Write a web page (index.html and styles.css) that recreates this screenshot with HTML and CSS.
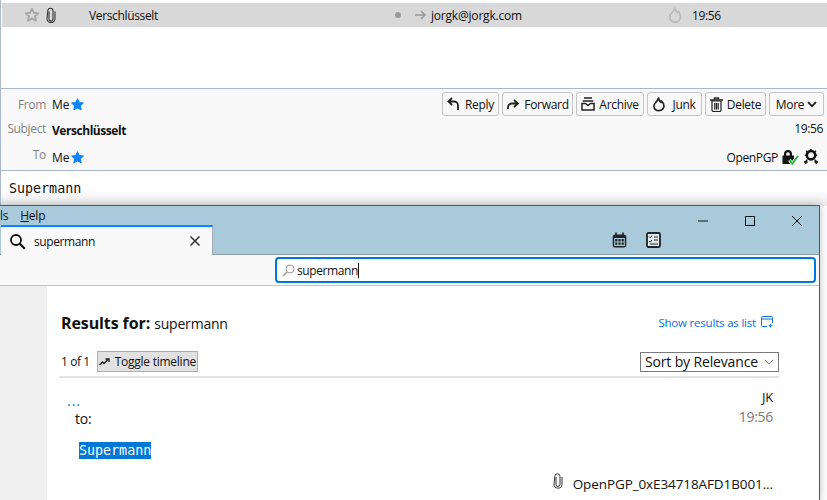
FILE: index.html
```html
<!DOCTYPE html>
<html lang="en">
<head>
<meta charset="utf-8">
<title>Supermann</title>
<link rel="stylesheet" href="styles.css">
</head>
<body>
<section class="mail">
  <div class="row">
    <span class="cell-star"><svg width="16" height="16" viewBox="0 0 16 16"><path d="M8 1.800l1.900 4 4.400.5-3.200 3 .9 4.400L8 11.500l-4 2.200.9-4.400-3.200-3 4.400-.5z" fill="none" stroke="#aaa" stroke-width="2" stroke-linejoin="round"/></svg></span>
    <span class="cell-clip"><svg width="10" height="16" viewBox="0 0 10 16"><path d="M3 4v7.500a2 2 0 0 0 4 0V3.500a2.600 2.600 0 0 0-5.200-.2L1 11a4 4 0 0 0 8 .3V4" transform="translate(0 .5)" fill="none" stroke="#333" stroke-width="1.100"/></svg></span>
    <span class="cell-subject">Verschlüsselt</span>
    <span class="cell-dot"></span>
    <span class="cell-arrow"><svg width="14" height="12" viewBox="0 0 14 12"><path d="M1 6h10M7 2l4 4-4 4" fill="none" stroke="#999" stroke-width="1.600"/></svg></span>
    <span class="cell-to">jorgk@jorgk.com</span>
    <span class="cell-flame"><svg width="14" height="16" viewBox="0 0 14 16"><path d="M7 .8c.5 2.800 1.300 3.700 2.500 5.200.1-.8.300-1.300.6-1.800 1.400 1.500 2.400 3.200 2.400 5.500a5.400 5.400 0 0 1-10.800 0C1.700 7.700 3.200 6.500 4.500 5c1.200-1.300 2-2.700 2.500-4.200z" fill="none" stroke="#bbb" stroke-width="1.800" stroke-linejoin="round"/></svg></span>
    <span class="cell-time">19:56</span>
  </div>
  <div class="spacer"></div>
  <header class="head">
    <div class="head-line first">
      <span class="label">From</span>
      <span class="who">Me</span>
      <svg class="fav" width="13" height="13" viewBox="0 0 14 14"><path d="M7 .8l2 4 4.400.6-3.200 3 .8 4.400L7 10.700l-4 2.100.8-4.400L.6 5.400 5 4.800z" fill="#0a84ff" stroke="#0a84ff" stroke-linejoin="round"/></svg>
      <div class="actions">
        <button class="btn btn-reply"><svg width="13" height="14" viewBox="0 0 13 14"><path d="M5 1L1.500 4.500 5 8M2 4.500h5a4 4 0 0 1 4 4V13" fill="none" stroke="#222" stroke-width="1.800"/></svg>Reply</button>
        <button class="btn btn-forward"><svg width="13" height="10" viewBox="0 0 13 10"><path d="M8 1l4 3.500L8 8M11.500 4.500H6a4 4 0 0 0-4 4V10" fill="none" stroke="#222" stroke-width="1.800"/></svg>Forward</button>
        <button class="btn btn-archive"><svg width="14" height="14" viewBox="0 0 14 14"><path d="M3 1h8M1.700 4h10.600" fill="none" stroke="#222" stroke-width="1.300"/><path d="M1 6.500h3.500L7 8.500l2.500-2H13V13H1z" fill="none" stroke="#222" stroke-width="1.500"/></svg>Archive</button>
        <button class="btn btn-junk"><svg width="12" height="15" viewBox="0 0 12 15"><path d="M5.500 1c.5 2.500 1.200 3.200 2.400 4.400 0-.7.200-1.100.500-1.500 1.500 1.500 2.600 3 2.600 5.300A5.100 5.100 0 0 1 .9 9.300C.9 6.800 2.500 5.800 3.700 4.400 4.600 3.400 5.200 2.200 5.500 1z" fill="none" stroke="#222" stroke-width="1.700" stroke-linejoin="round"/></svg>Junk</button>
        <button class="btn btn-delete"><svg width="13" height="15" viewBox="0 0 13 15"><path d="M0 3h13M4.500 2.500V1h4v1.500" fill="none" stroke="#222" stroke-width="1.300"/><path d="M2 4h9v9a1.500 1.500 0 0 1-1.500 1.500h-6A1.500 1.500 0 0 1 2 13zM4.800 6v6.500M6.500 6v6.500M8.200 6v6.500" fill="none" stroke="#222" stroke-width="1.200"/></svg>Delete</button>
        <button class="btn btn-more">More<svg width="10" height="7" viewBox="0 0 10 7"><path d="M1 1.200l4 4 4-4" fill="none" stroke="#222" stroke-width="1.800"/></svg></button>
      </div>
    </div>
    <div class="head-line second">
      <span class="label">Subject</span>
      <span class="subject">Verschlüsselt</span>
      <span class="date">19:56</span>
    </div>
    <div class="head-line third">
      <span class="label">To</span>
      <span class="who">Me</span>
      <svg class="fav" width="13" height="13" viewBox="0 0 14 14"><path d="M7 .8l2 4 4.400.6-3.200 3 .8 4.400L7 10.700l-4 2.100.8-4.400L.6 5.400 5 4.800z" fill="#0a84ff" stroke="#0a84ff" stroke-linejoin="round"/></svg>
      <span class="pgp">OpenPGP</span>
      <svg class="lock" width="17" height="16" viewBox="0 0 17 16"><path d="M.5 6.500H2V5a4 4 0 0 1 8 0v1.500h2V15H.5zM4.200 6.500h3.600V5a1.800 1.800 0 0 0-3.600 0z" fill="#111" fill-rule="evenodd"/><path d="M7.500 11l2.800 3.600L16 7" fill="none" stroke="#f8f8f8" stroke-width="3.400"/><path d="M7.500 11l2.800 3.600L16 7" fill="none" stroke="#26b83a" stroke-width="2"/></svg>
      <svg class="seal" width="16" height="16" viewBox="0 0 16 16"><circle cx="8" cy="6.200" r="4.200" fill="none" stroke="#111" stroke-width="2.600"/><path d="M8 0v1.500M3.200 1.800l1.200 1.200M12.800 1.800l-1.200 1.200M1.800 6.200h1.400M12.800 6.200h1.400" stroke="#111" stroke-width="1.500"/><path d="M4.300 10.500L2.800 13M11.700 10.500l1.500 2.500M1 13h3.600M2.800 11.500v3.500M11.400 13H15M13.200 11.500v3.500" stroke="#111" stroke-width="1.400"/></svg>
    </div>
  </header>
  <div class="body-text">Supermann</div>
</section>

<section class="window">
  <div class="titlebar">
    <div class="menubar"><span>ls</span><span class="help"><u>H</u>elp</span></div>
    <div class="controls">
      <svg width="12" height="12" viewBox="0 0 12 12"><path d="M1 6h10" stroke="#111"/></svg>
      <svg width="12" height="12" viewBox="0 0 12 12"><rect x="1.500" y="1.500" width="9" height="9" fill="none" stroke="#111"/></svg>
      <svg width="12" height="12" viewBox="0 0 12 12"><path d="M1 1l10 10M11 1L1 11" stroke="#111"/></svg>
    </div>
    <div class="tabrow">
      <div class="tab">
        <svg class="tab-search" width="17" height="17" viewBox="0 0 17 17"><circle cx="7" cy="7" r="5" fill="none" stroke="#111" stroke-width="1.800"/><path d="M10.800 10.800l5 5" stroke="#111" stroke-width="2.200"/></svg>
        <span class="tab-label">supermann</span>
        <svg class="tab-close" width="12" height="12" viewBox="0 0 12 12"><path d="M1.500 1.500l9 9M10.500 1.500l-9 9" stroke="#333" stroke-width="1.500"/></svg>
      </div>
      <div class="tools">
        <svg width="15" height="16" viewBox="0 0 15 16"><path d="M4 .5v3.500M11 .5v3.500" stroke="#222" stroke-width="1.600"/><rect x=".7" y="2.400" width="13.600" height="13" rx="2.500" fill="#222"/><rect x="2.200" y="6" width="10.600" height="8" fill="#a8cadb"/><path d="M3.200 7h2.200v2.400H3.200zM6.400 7h2.200v2.400H6.400zM9.600 7h2.200v2.400H9.600zM3.200 10.400h2.200v2.400H3.200zM6.400 10.400h2.200v2.400H6.400zM9.600 10.400h2.200v2.400H9.600z" fill="#222"/></svg>
        <svg width="15" height="16" viewBox="0 0 15 16"><rect x="1" y="1" width="13" height="14" rx="1.500" fill="#dfe9ee" stroke="#222" stroke-width="1.800"/><path d="M3 4.500l1.200 1.200L6 3.500M3 9l1.200 1.200L6 8M8 5h4M8 8h4M4 12h8" fill="none" stroke="#222"/></svg>
      </div>
    </div>
  </div>
  <div class="toolbar">
    <div class="searchbox">
      <svg width="13" height="13" viewBox="0 0 13 13"><circle cx="8" cy="5" r="4" fill="none" stroke="#999"/><path d="M5 8l-4 4" stroke="#999" stroke-width="1.400"/></svg>
      <span class="search-text">supermann</span><span class="caret"></span>
    </div>
  </div>
  <div class="content">
    <aside class="gutter"></aside>
    <main class="results">
      <div class="results-head">
        <h1><b>Results for:</b> <span>supermann</span></h1>
        <a class="aslist">Show results as list<svg width="12" height="12" viewBox="0 0 12 12"><path d="M6 10.500H1.500a1 1 0 0 1-1-1v-8a1 1 0 0 1 1-1h9a1 1 0 0 1 1 1V7M.5 3h11M9.500 8v3.500M7.500 9.800h4" fill="none" stroke="#0a6fdc"/></svg></a>
      </div>
      <div class="results-bar">
        <span class="count">1 of 1</span>
        <span class="timeline"><svg width="11" height="8" viewBox="0 0 11 8"><path d="M.5 7l3-3 1.500 1.500L9 1.500M6.500 1H10v3" fill="none" stroke="#222" stroke-width="1.400"/></svg>Toggle timeline</span>
        <span class="sort">Sort by Relevance<svg width="10" height="6" viewBox="0 0 10 6"><path d="M.8.800L5 5 9.200.8" fill="none" stroke="#777"/></svg></span>
      </div>
      <article class="hit">
        <div class="hit-top"><a class="dots">...</a><span class="author">JK</span></div>
        <div class="hit-mid"><span class="to">to:</span><span class="time">19:56</span></div>
        <div class="snippet"><mark>Supermann</mark></div>
        <div class="attach"><svg width="10" height="16" viewBox="0 0 10 16"><path d="M3 4v7.500a2 2 0 0 0 4 0V3.500a2.600 2.600 0 0 0-5.200-.2L1 11a4 4 0 0 0 8 .3V4" fill="none" stroke="#333"/></svg><span>OpenPGP_0xE34718AFD1B001...</span></div>
      </article>
    </main>
  </div>
</section>
</body>
</html>
```

FILE: styles.css
```css
* { box-sizing: border-box; }
html, body { margin: 0; padding: 0; height: 500px; overflow: hidden; background: #fff; }
body { font-family: "Open Sans", "Noto Sans", sans-serif; font-size: 12px; color: #111; position: relative; }
svg { flex: none; display: block; }

.mail { height: 206px; border-left: 1px solid #a9b8cd; padding-top: 3px;
  background: linear-gradient(#fff 190px, #ececec 203px); }
.row { height: 24px; margin-left: 1px; background: #d8d8d8; display: flex; align-items: center; letter-spacing: -.35px; }
.cell-star { margin-left: 22px; width: 22px; }
.cell-clip { width: 43px; }
.cell-subject { width: 306px; }
.cell-dot { width: 6px; height: 6px; border-radius: 50%; background: #999; margin-right: 13px; }
.cell-arrow { width: 17px; }
.cell-to { width: 237px; letter-spacing: -.2px; }
.cell-flame { width: 24px; }
.spacer { height: 62px; border-bottom: 1px solid #a9b8cd; }
.head { height: 82px; background: #f8f8f8; border-bottom: 1px solid #a9b8cd; padding-top: 1px; letter-spacing: -.35px; }
.head-line { display: flex; align-items: center; position: relative; }
.first { height: 28px; }
.second { height: 24px; }
.third { height: 28px; }
.label { width: 45px; text-align: right; color: #848484; margin-right: 6px; }
.second .label { margin-top: -3px; }
.third .label { margin-top: -3px; }
.who { letter-spacing: 0; }
.third .who, .third .fav, .third .pgp, .third .lock, .third .seal { margin-top: 2px; }
.fav { margin-left: 1px; }
.actions { margin-left: auto; margin-right: 3px; display: flex; gap: 3px; }
.btn { height: 24px; font: inherit; letter-spacing: -.3px; color: #111; background: #f8f8f8; border: 1px solid #c4c4c4; border-radius: 3px;
  padding: 0; display: flex; align-items: center; justify-content: center; gap: 5px; }
.btn-reply { width: 57px; }
.btn-forward { width: 71px; }
.btn-archive { width: 68px; gap: 4px; }
.btn-junk { width: 55px; gap: 7px; }
.btn-delete { width: 61px; gap: 4px; }
.btn-more { width: 55px; gap: 3px; }
.subject { font-weight: 700; letter-spacing: -.45px; }
.date { margin-left: auto; margin-right: 4px; margin-top: -3px; }
.pgp { margin-left: auto; margin-right: 4px; }
.lock { margin-right: 4px; }
.seal { margin-right: 8px; }
.body-text { font-family: "DejaVu Sans Mono", monospace; font-size: 13.33px; padding: 10px 0 0 8px; line-height: 15px; }

.window { position: absolute; left: -1px; top: 205px; width: 821px; height: 296px; border: 1px solid #555; border-left: 0; border-bottom: 0;
  background: #fff; box-shadow: 0 0 8px rgba(0,0,0,.25); letter-spacing: -.25px; }
.titlebar { height: 49px; background: #a8cadb; border-bottom: 1px solid #8a9ba5; position: relative; }
.menubar { height: 19px; display: flex; align-items: center; gap: 12px; padding-left: 1px; }
.controls { position: absolute; top: 9px; right: 16px; display: flex; gap: 35px; }
.tabrow { position: absolute; left: 0; right: 0; bottom: -1px; height: 30px; display: flex; }
.tab { width: 212px; margin-left: 2px; height: 30px; background: #f9f9f9; border-top: 2px solid #0a84ff; border-right: 1px solid #aab; display: flex; align-items: center; position: relative; z-index: 1; }
.tab-search { margin-left: 8px; }
.tab-label { margin-left: 8px; letter-spacing: -.4px; }
.tab-close { margin-left: auto; margin-right: 11px; }
.tools { margin-left: 399px; display: flex; gap: 19px; padding-top: 7px; }
.toolbar { height: 31px; background: #f9f9f9; border-bottom: 1px solid #c4c4c4; padding: 2px 3px 0 276px; }
.searchbox { height: 26px; border: 2px solid #0078d7; border-radius: 4px; background: #fff; display: flex; align-items: center; padding-left: 5px; }
.search-text { margin-left: 2px; letter-spacing: -.4px; }
.caret { width: 1px; height: 15px; background: #111; }
.content { display: flex; height: 215px; }
.gutter { width: 48px; background: #f0f0f0; }
.results { width: 772px; padding: 0 40px 0 12px; }
.results-head { display: flex; justify-content: space-between; align-items: center; margin-top: 24px; height: 24px; padding: 0 6px 0 2px; }
h1 { margin: 2px 0 0; font-size: 16px; font-weight: 400; letter-spacing: -.1px; }
h1 b { font-weight: 700; }
h1 span { font-size: 14px; letter-spacing: -.2px; }
.aslist { display: flex; align-items: center; gap: 5px; color: #0a6fdc; font-size: 11.5px; letter-spacing: -.2px; }
.results-bar { display: flex; align-items: center; margin-top: 17px; border-bottom: 2px solid #e4e4e4; padding-bottom: 4px; box-sizing: content-box; height: 21px; }
.count { margin-left: 2px; letter-spacing: -.4px; }
.timeline { margin-left: 7px; height: 21px; width: 101px; background: #e1e1e1; border: 1px solid #adadad; display: flex; align-items: center; justify-content: center; gap: 5px; }
.sort { margin-left: auto; width: 139px; height: 20px; border: 1px solid #7a7a7a; display: flex; align-items: center; justify-content: space-between; padding: 0 4px; font-size: 14px; letter-spacing: -.15px; }
.hit-top, .hit-mid { display: flex; justify-content: space-between; padding-right: 6px; }
.hit-top { margin-top: 11px; padding-left: 8px; height: 17px; }
.dots { color: #0a6fdc; font-size: 14px; line-height: 24px; letter-spacing: 1px; }
.author { font-size: 13px; line-height: 17px; }
.hit-mid { height: 24px; padding-left: 16px; align-items: center; }
.to { font-size: 14px; letter-spacing: -.2px; }
.time { color: #777; font-size: 14px; letter-spacing: -.3px; margin-top: -3px; }
.snippet { margin: 12px 0 0 20px; font-family: "DejaVu Sans Mono", monospace; font-size: 13.33px; letter-spacing: 0; line-height: 17px; }
mark { background: #0078d7; color: #fff; display: inline-block; }
.attach { display: flex; justify-content: flex-end; align-items: flex-start; gap: 10px; margin-top: 14px; padding-right: 6px; font-size: 13.5px; letter-spacing: -.1px; }
.attach span { margin-top: 2px; }
```
